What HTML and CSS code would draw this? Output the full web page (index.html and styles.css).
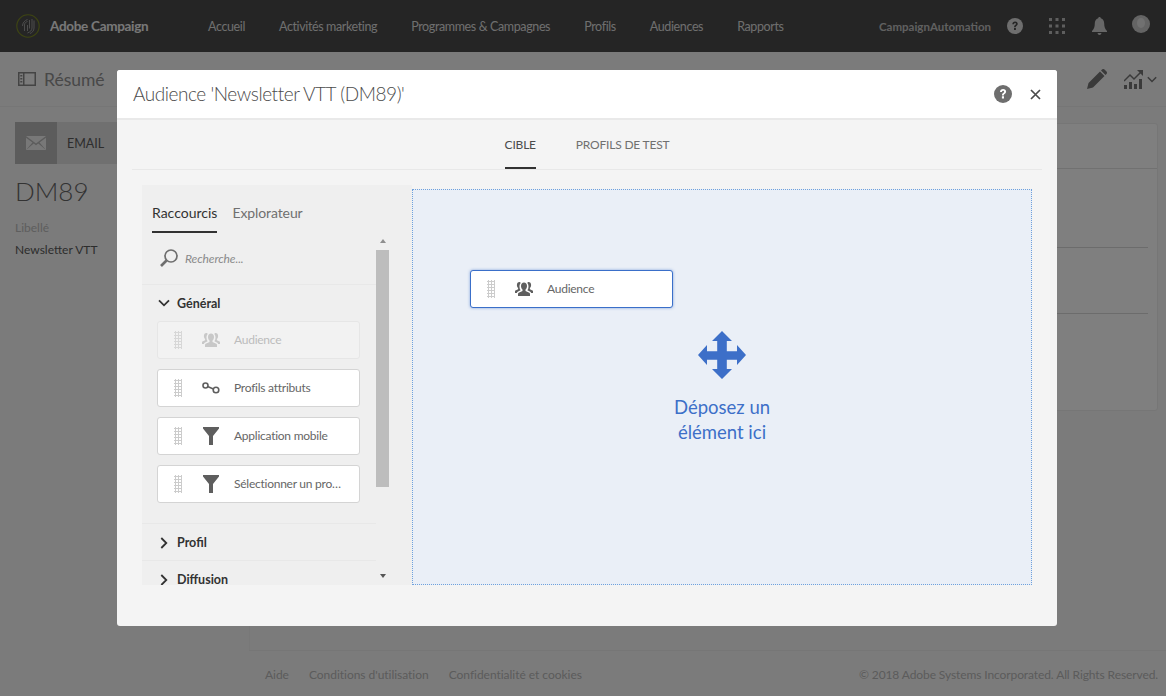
FILE: index.html
```html
<!DOCTYPE html>
<html lang="fr">
<head>
    <meta charset="UTF-8">
    <meta name="viewport" content="width=device-width, initial-scale=1.0">
    <title>Adobe Campaign</title>
    <link rel="stylesheet" href="styles.css">
</head>
<body>
    <svg class="defs" width="0" height="0">
        <symbol id="ic-audience" viewBox="0 1 18 14">
            <path d="M9 1.500c-1.800 0-3 1.400-3 3.400 0 1.500.6 2.900 1.500 3.700v1.500L3.700 11.800c-.5.300-.7.700-.7 1.200V15h12v-2c0-.5-.2-.9-.7-1.200l-3.800-1.700V8.600c.9-.8 1.500-2.200 1.500-3.700 0-2-1.200-3.400-3-3.400z"/>
            <path d="M4.400 1C2.900 1 1.900 2.200 1.900 3.900c0 1.300.5 2.400 1.200 3.100v1.300L0 9.800V12h1.900c.2-.7.600-1.200 1.200-1.500l2.500-1.200c-.7-1-1.100-2.300-1.100-3.600 0-1.400.4-2.700 1.200-3.600C5.400 1.300 4.900 1 4.400 1z"/>
            <path d="M13.600 1c1.500 0 2.500 1.200 2.500 2.900 0 1.300-.5 2.400-1.200 3.100v1.300L18 9.800V12h-1.900c-.2-.7-.6-1.200-1.200-1.500l-2.500-1.200c.7-1 1.100-2.300 1.100-3.600 0-1.400-.4-2.700-1.200-3.600.3-.8.800-1.100 1.300-1.100z"/>
        </symbol>
        <symbol id="ic-link" viewBox="0 0 18 12">
            <circle cx="3.500" cy="3.500" r="2.500" fill="none" stroke="currentColor" stroke-width="1.600"/>
            <circle cx="14" cy="8" r="2.800" fill="none" stroke="currentColor" stroke-width="1.600"/>
            <path d="M5.600 4.600l5.800 2.300" fill="none" stroke="currentColor" stroke-width="1.600"/>
        </symbol>
        <symbol id="ic-funnel" viewBox="0 0 16 18">
            <path d="M0 0h16v1.500L10 9v9H6V9L0 1.500z"/>
        </symbol>
        <symbol id="ic-help" viewBox="0 0 18 18">
            <circle cx="9" cy="9" r="9"/>
            <path class="help-mark" d="M6 6.900C6 5 7.300 4 9.100 4c1.800 0 3 1 3 2.600 0 1.200-.7 1.800-1.500 2.400-.6.400-.8.700-.8 1.400H8c0-1.200.3-1.800 1.100-2.400.6-.5 1-.8 1-1.300 0-.6-.4-1-1-1-.7 0-1.100.4-1.200 1.200zM7.900 11.300h2.100v2.200H7.900z"/>
        </symbol>
        <symbol id="ic-chevron" viewBox="0 0 12 8">
            <path d="M1 1.300l5 5 5-5" fill="none" stroke="currentColor" stroke-width="1.800"/>
        </symbol>
    </svg>

    <div class="app">
        <header class="topbar">
            <div class="brand">
                <svg class="brand-logo" viewBox="0 0 24 24" width="24" height="24">
                    <circle cx="12" cy="12" r="11.200" fill="none" stroke="#7c8a24" stroke-width="1.100"/>
                    <path d="M6.500 12c0-3 2-5.500 5-6.500M8.500 17V11c0-1.800 1.200-3 3-3.500M16 5v9c0 2.500-2 4-4.500 5M18 6.500V14c0 3-2 4.500-4 5.500M11.500 11v6M13.500 6v8.500" fill="none" stroke="#9a9a9a" stroke-width="1"/>
                </svg>
                <span class="brand-name">Adobe Campaign</span>
            </div>
            <nav class="topnav">
                <a>Accueil</a>
                <a>Activités marketing</a>
                <a>Programmes &amp; Campagnes</a>
                <a>Profils</a>
                <a>Audiences</a>
                <a>Rapports</a>
            </nav>
            <div class="topright">
                <span class="org">CampaignAutomation</span>
                <svg class="top-help" width="16" height="16"><use href="#ic-help"/></svg>
                <svg class="top-grid" viewBox="0 0 16 16" width="16" height="16">
                    <path d="M0 0h3v3H0zM6.500 0h3v3h-3zM13 0h3v3h-3zM0 6.500h3v3H0zM6.500 6.500h3v3h-3zM13 6.500h3v3h-3zM0 13h3v3H0zM6.500 13h3v3h-3zM13 13h3v3h-3z"/>
                </svg>
                <svg class="top-bell" viewBox="0 0 15 18" width="15" height="18">
                    <path d="M7.500 0C6.700 0 6.200.6 6.200 1.300 3.900 2 2.800 4 2.800 6.500c0 3.500-.8 5.500-2.800 7.500v1h15v-1c-2-2-2.800-4-2.800-7.500 0-2.500-1.100-4.500-3.400-5.200C8.800.6 8.300 0 7.500 0zM5.500 16c.3 1.200 1 2 2 2s1.700-.8 2-2z"/>
                </svg>
                <span class="avatar"><span class="avatar-head"></span></span>
            </div>
        </header>

        <div class="subbar">
            <svg class="sub-icon" viewBox="0 0 18 14" width="18" height="14">
                <path d="M0 0h18v14H0zm1.500 1.500v11H5v-11zm5 0v11h10v-11zM2.300 3h2v1.500h-2zm0 3h2v1.500h-2zm0 3h2v1.500h-2z" fill-rule="evenodd"/>
            </svg>
            <span class="sub-title">Résumé</span>
            <div class="sub-actions">
                <svg class="sub-pencil" viewBox="0 0 20 20" width="20" height="20">
                    <path d="M0 20l1.500-6L13 2.500l4.500 4.500L6 18.500zM15 .5c.7-.7 1.800-.7 2.500 0l2 2c.7.7.7 1.800 0 2.500L18.500 6 14 1.500z"/>
                </svg>
                <svg class="sub-chart" viewBox="0 0 20 19" width="20" height="19">
                    <path d="M0 15h3v4H0zM5 12h3v7H5zM10 14h3v5h-3zM15 9h3v10h-3z"/>
                    <path d="M0 11l6-6 4 4 7-7" fill="none" stroke="currentColor" stroke-width="1.500"/>
                    <path d="M13 0h6v6z"/>
                </svg>
                <svg class="sub-chevron" width="10" height="7"><use href="#ic-chevron"/></svg>
            </div>
        </div>

        <div class="workspace">
            <aside class="summary">
                <div class="type-tile">
                    <span class="type-icon">
                        <svg viewBox="0 0 20 14" width="20" height="14">
                            <path d="M0 0l10 7.500L20 0zM0 1.800V14l6.500-7.400zM20 1.800V14l-6.500-7.400zM7.700 7.500L0 14h20l-7.700-6.500L10 9.300z"/>
                        </svg>
                    </span>
                    <span class="type-label">EMAIL</span>
                </div>
                <div class="summary-code">DM89</div>
                <div class="summary-key">Libellé</div>
                <div class="summary-value">Newsletter VTT</div>
            </aside>
            <main class="details">
                <div class="card">
                    <div class="card-head"></div>
                    <div class="card-row"></div>
                    <div class="card-row short"></div>
                    <div class="card-row last"></div>
                </div>
            </main>
        </div>

        <footer class="footer">
            <a>Aide</a>
            <a>Conditions d'utilisation</a>
            <a>Confidentialité et cookies</a>
            <span class="copyright">© 2018 Adobe Systems Incorporated. All Rights Reserved.</span>
        </footer>
    </div>

    <div class="overlay">
        <section class="modal">
            <div class="modal-head">
                <h2>Audience 'Newsletter VTT (DM89)'</h2>
                <svg class="modal-help" width="18" height="18"><use href="#ic-help"/></svg>
                <svg class="modal-close" viewBox="0 0 11 11" width="11" height="11">
                    <path d="M1 1l9 9M10 1l-9 9" fill="none" stroke="currentColor" stroke-width="1.700"/>
                </svg>
            </div>
            <div class="modal-tabs">
                <a class="modal-tab active">CIBLE</a>
                <a class="modal-tab">PROFILS DE TEST</a>
            </div>
            <div class="editor">
                <div class="palette">
                    <div class="palette-tabs">
                        <a class="palette-tab active">Raccourcis</a>
                        <a class="palette-tab">Explorateur</a>
                    </div>
                    <div class="palette-body">
                        <div class="palette-list">
                            <div class="search">
                                <svg viewBox="0 0 18 19" width="18" height="19">
                                    <circle cx="11" cy="7" r="6" fill="none" stroke="currentColor" stroke-width="1.700"/>
                                    <path d="M6.500 11.500L1 17" fill="none" stroke="currentColor" stroke-width="2.600"/>
                                </svg>
                                <span>Recherche...</span>
                            </div>
                            <div class="group open">
                                <div class="group-title">
                                    <svg class="chev-down" width="12" height="8"><use href="#ic-chevron"/></svg>
                                    Général
                                </div>
                                <div class="item disabled">
                                    <span class="grip"></span>
                                    <svg class="item-icon" width="18" height="14"><use href="#ic-audience"/></svg>
                                    <span class="item-label">Audience</span>
                                </div>
                                <div class="item">
                                    <span class="grip"></span>
                                    <svg class="item-icon" width="18" height="12"><use href="#ic-link"/></svg>
                                    <span class="item-label">Profils attributs</span>
                                </div>
                                <div class="item">
                                    <span class="grip"></span>
                                    <svg class="item-icon" width="16" height="18"><use href="#ic-funnel"/></svg>
                                    <span class="item-label">Application mobile</span>
                                </div>
                                <div class="item">
                                    <span class="grip"></span>
                                    <svg class="item-icon" width="16" height="18"><use href="#ic-funnel"/></svg>
                                    <span class="item-label">Sélectionner un pro…</span>
                                </div>
                            </div>
                            <div class="group">
                                <div class="group-title">
                                    <svg class="chev-right" width="12" height="8"><use href="#ic-chevron"/></svg>
                                    Profil
                                </div>
                            </div>
                            <div class="group">
                                <div class="group-title">
                                    <svg class="chev-right" width="12" height="8"><use href="#ic-chevron"/></svg>
                                    Diffusion
                                </div>
                            </div>
                        </div>
                        <div class="scrollbar">
                            <span class="arrow up"></span>
                            <div class="track"><div class="thumb"></div></div>
                            <span class="arrow down"></span>
                        </div>
                    </div>
                </div>
                <div class="dropzone">
                    <div class="item dragged">
                        <span class="grip"></span>
                        <svg class="item-icon" width="18" height="14"><use href="#ic-audience"/></svg>
                        <span class="item-label">Audience</span>
                    </div>
                    <div class="drop-hint">
                        <svg viewBox="0 0 48 48" width="48" height="48">
                            <path d="M24 0l10 10h-5.200v10.200H39V14l9 10-9 10v-5.200H28.800V38H34L24 48 14 38h5.200V28.800H9V34L0 24l9-10v6.200h10.200V10H14z"/>
                        </svg>
                        <p>Déposez un<br>élément ici</p>
                    </div>
                </div>
            </div>
        </section>
    </div>
</body>
</html>
```

FILE: styles.css
```css
* { box-sizing: border-box; }
html, body { height: 100%; }
body { margin: 0; font-family: "Lato", "Open Sans", sans-serif; background-color: #f6f6f6; color: #4b4b4b; overflow: hidden; }
.defs { position: absolute; }
h2, p { margin: 0; }
.help-mark { fill: var(--mark, #fff); }

/* page behind the dialog */
.app { height: 696px; display: flex; flex-direction: column; }
.topbar { height: 52px; background: #4b4b4b; color: #e0e0e0; display: flex; align-items: center; padding-left: 16px; flex: none; }
.brand { display: flex; align-items: center; width: 192px; }
.brand-logo { flex: none; }
.brand-name { margin-left: 10px; font-size: 13.500px; letter-spacing: -0.3px; font-weight: 700; color: #f0f0f0; white-space: nowrap; }
.topnav { display: flex; gap: 34px; font-size: 12.500px; letter-spacing: -0.38px; color: #dedede; white-space: nowrap; }
.topright { margin-left: auto; display: flex; align-items: center; padding-right: 16px; }
.org { font-size: 11.500px; font-weight: 700; color: #c0c0c0; width: 128px; }
.top-help { fill: #dcdcdc; --mark: #4b4b4b; margin-right: 26px; }
.top-grid { fill: #bdbdbd; margin-right: 27px; }
.top-bell { fill: #cfcfcf; margin-right: 25px; }
.avatar { width: 18px; height: 18px; border-radius: 50%; background: #c9c9c9; margin-top: -4px; overflow: hidden; display: block; }
.avatar-head { display: block; width: 8px; height: 10px; margin: 3px auto 0; border-radius: 50%; background: #e2e2e2; }

.subbar { height: 55px; flex: none; border-bottom: 1px solid #ececec; display: flex; align-items: center; padding: 0 9px 0 18px; }
.sub-icon { fill: #888; }
.sub-title { margin-left: 8px; font-size: 17.500px; color: #909090; }
.sub-actions { margin-left: auto; display: flex; align-items: center; color: #757575; fill: #757575; }
.sub-pencil { margin-right: 17px; }
.sub-chart { margin-right: 3px; width: 20px; }

.workspace { flex: 1; display: flex; min-height: 0; }
.summary { width: 249px; flex: none; padding: 15px; }
.type-tile { display: flex; align-items: center; height: 42px; background: #e0e0e0; }
.type-icon { width: 42px; height: 42px; background: #b8b8b8; display: flex; align-items: center; justify-content: center; fill: #f0f0f0; }
.type-label { margin-left: 10px; font-size: 12.500px; color: #5a5a5a; }
.summary-code { margin-top: 9px; font-size: 26px; font-weight: 300; color: #666; line-height: 36px; }
.summary-key { margin-top: 11px; font-size: 12px; color: #bcbcbc; }
.summary-value { margin-top: 7px; font-size: 12px; color: #5a5a5a; }
.details { flex: 1; padding: 16px 8px 0 0; border-left: 1px solid #f0f0f0; }
.card { height: 288px; background: #fefefe; border: 1px solid #ececec; border-radius: 3px; }
.card-head { height: 45px; border-bottom: 1px solid #e2e2e2; }
.card-row { height: 79px; margin-right: 9px; border-bottom: 1px solid #d8d8d8; }
.card-row.short { height: 66px; }
.card-row.last { border-bottom: 0; }

.footer { height: 46px; flex: none; margin-left: 249px; border-top: 1px solid #ececec; display: flex; align-items: center; gap: 20px; padding: 2px 8px 0 16px; font-size: 12px; letter-spacing: -0.03px; color: #b8b8b8; white-space: nowrap; }
.copyright { margin-left: auto; letter-spacing: -0.1px; }

/* dialog */
.overlay { position: fixed; top: 0; left: 0; right: 0; bottom: 0; background: rgba(0,0,0,0.5); display: flex; justify-content: center; align-items: flex-start; padding: 70px 0 0 8px; }
.modal { width: 940px; height: 556px; background: #f4f4f4; border-radius: 3px; display: flex; flex-direction: column; overflow: hidden; }
.modal-head { height: 50px; flex: none; background: #fff; border-bottom: 2px solid #e9e9e9; display: flex; align-items: center; padding: 0 16px; color: #6e6e6e; }
.modal-head h2 { font-size: 19px; letter-spacing: -0.45px; font-weight: 300; color: #4b4b4b; flex: 1; white-space: nowrap; padding-bottom: 2px; }
.modal-help { fill: #6e6e6e; }
.modal-close { margin-left: 18px; color: #4b4b4b; }

.modal-tabs { height: 50px; flex: none; margin: 0 15px; border-bottom: 1px solid #e8e8e8; display: flex; justify-content: center; gap: 40px; }
.modal-tab { font-size: 12px; letter-spacing: -0.2px; line-height: 49px; height: 49px; color: #707070; white-space: nowrap; }
.modal-tab.active { color: #4b4b4b; border-bottom: 2px solid #323232; }

.editor { flex: none; height: 400px; margin: 15px 25px 0; display: flex; }
.palette { width: 270px; flex: none; background: #efefef; display: flex; flex-direction: column; overflow: hidden; }
.palette-tabs { height: 48px; flex: none; display: flex; gap: 15px; padding: 16px 10px 0; }
.palette-tab { font-size: 14px; letter-spacing: -0.1px; color: #707070; height: 32px; line-height: 24px; white-space: nowrap; }
.palette-tab.active { letter-spacing: 0; color: #323232; border-bottom: 2px solid #323232; }
.palette-body { flex: 1; display: flex; min-height: 0; }
.palette-list { width: 234px; flex: none; }

.search { height: 52px; border-bottom: 1px solid #e8e8e8; display: flex; align-items: center; padding: 0 0 0 18px; color: #6e6e6e; }
.search span { margin-left: 7px; font-size: 12px; letter-spacing: -0.1px; font-style: italic; color: #8a8a8a; }

.group { border-bottom: 1px solid #e8e8e8; height: 37px; }
.group.open { height: 239px; }
.group-title { height: 37px; display: flex; align-items: center; padding-left: 16px; font-size: 12.500px; font-weight: 700; color: #323232; }
.group.open .group-title { height: 36px; }
.group-title svg { margin-right: 7px; color: #323232; }
.chev-right { transform: rotate(-90deg); }

.item { width: 203px; height: 38px; margin: 0 0 10px 15px; background: #fff; border: 1px solid #d4d4d4; border-radius: 3px; display: flex; align-items: center; color: #4b4b4b; fill: #5e5e5e; }
.item:last-child { margin-bottom: 0; }
.grip { width: 8px; height: 18px; margin-left: 16px; flex: none; background-image: radial-gradient(#cccccc 1px, transparent 1.100px); background-size: 3px 3px; }
.item-icon { margin-left: 20px; width: 18px; flex: none; color: #5e5e5e; }
.item-label { margin-left: 14px; padding-bottom: 2px; font-size: 12px; letter-spacing: -0.25px; color: #666; white-space: nowrap; }
.item.disabled { background: #f2f2f2; border-color: #e6e6e6; fill: #c8c8c8; }
.item.disabled .item-label { color: #bcbcbc; }
.item.disabled .grip { opacity: 0.7; }

.scrollbar { width: 13px; flex: none; margin-left: 0; display: flex; flex-direction: column; align-items: center; }
.arrow { width: 0; height: 0; border-left: 3.500px solid transparent; border-right: 3.500px solid transparent; flex: none; }
.arrow.up { border-bottom: 4px solid #8f8f8f; margin-top: 6px; margin-bottom: 7px; }
.arrow.down { border-top: 4px solid #555; margin-top: auto; margin-bottom: 7px; }
.track { width: 13px; height: 320px; flex: none; }
.thumb { height: 237px; background: #bdbdbd; }

.dropzone { flex: 1; margin-top: 4px; background: #eaeff7; border: 1px dotted #6fa1dc; position: relative; display: flex; flex-direction: column; align-items: center; padding: 141px 0 0 0; }
.item.dragged { position: absolute; left: 57px; top: 80px; margin: 0; border: 1px solid #3a6fc9; box-shadow: 0 0 3px rgba(58,111,201,0.6); }
.drop-hint { text-align: center; color: #3d6fc8; fill: #3d6fc8; }
.drop-hint svg { display: block; margin: 0 auto; }
.drop-hint p { margin-top: 16px; font-size: 18.500px; line-height: 25px; }
```
